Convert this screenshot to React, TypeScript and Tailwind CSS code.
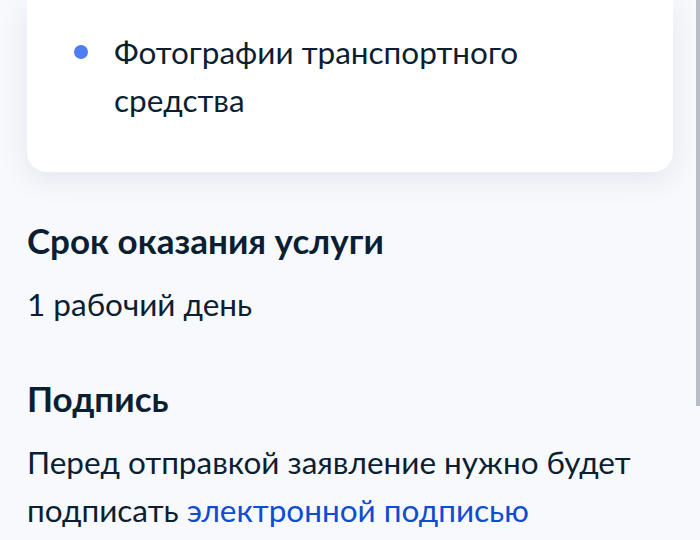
export default function App() {
  return (
    <div
      className="relative min-h-[540px] w-full overflow-hidden bg-[#f8f9fc] px-[27px] text-[#0b1f33]"
      style={{ fontFamily: 'Lato, "Noto Sans", sans-serif' }}
    >
      <div className="rounded-b-[20px] bg-white pb-[48px] pl-[47px] pr-6 pt-[28px] shadow-[0_8px_28px_rgba(35,64,122,0.10)]">
        <ul>
          <li className="flex items-start gap-[26px] text-[31.5px] leading-[48px]">
            <span className="mt-[17px] h-[14px] w-[14px] shrink-0 rounded-full bg-[#4f7cf3]" />
            <span>
              Фотографии транспортного
              <br />
              средства
            </span>
          </li>
        </ul>
      </div>

      <section className="mt-[50px]">
        <h2 className="text-[35px] font-bold leading-[36px]">Срок оказания услуги</h2>
        <p className="mt-[22px] text-[31.5px] leading-[48px]">1 рабочий день</p>
      </section>

      <section className="mt-[52px]">
        <h2 className="text-[35px] font-bold leading-[36px]">Подпись</h2>
        <p className="mt-[22px] text-[31.5px] leading-[48px]">
          Перед отправкой заявление нужно будет подписать{' '}
          <a href="#" className="text-[#0d4cd3]">
            электронной подписью
          </a>
        </p>
      </section>

      <div className="absolute right-0 top-0 h-[406px] w-[4px] bg-[#b9bdc6]" />
    </div>
  );
}
